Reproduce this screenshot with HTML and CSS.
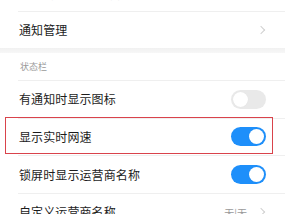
FILE: index.html
```html
<!DOCTYPE html>
<html lang="zh-CN">
<head>
<meta charset="utf-8">
<link rel="stylesheet" href="styles.css">
</head>
<body>
<div class="page">
  <div class="prev"><span class="prev-text">在状态栏、锁屏和桌面图标上显示通知</span></div>
  <div class="row row-first">
    <span class="label">通知管理</span>
    <span class="chev"></span>
  </div>
  <div class="band"></div>
  <div class="section">状态栏</div>
  <div class="row">
    <span class="label">有通知时显示图标</span>
    <span class="toggle"><span class="knob"></span></span>
  </div>
  <div class="row">
    <span class="label">显示实时网速</span>
    <span class="toggle on"><span class="knob"></span></span>
  </div>
  <div class="row">
    <span class="label">锁屏时显示运营商名称</span>
    <span class="toggle on"><span class="knob"></span></span>
  </div>
  <div class="row">
    <span class="label">自定义运营商名称</span>
    <span class="right"><span class="value">无|无</span><span class="chev"></span></span>
  </div>
  <div class="highlight"></div>
</div>
</body>
</html>
```

FILE: styles.css
```css
html, body {
  margin: 0;
  padding: 0;
  background: #ffffff;
}
body {
  font-family: "Noto Sans CJK SC", "Noto Sans", sans-serif;
  color: #1c1c1c;
  overflow: hidden;
}
.page {
  position: relative;
  width: 285px;
  height: 214px;
  overflow: hidden;
}
.prev {
  height: 11px;
  overflow: hidden;
  padding-left: 20px;
}
.prev-text {
  display: block;
  margin-top: -11px;
  font-size: 10px;
  line-height: 12px;
  color: #d6d6d6;
}
.row {
  box-sizing: border-box;
  height: 37.67px;
  margin-left: 18px;
  padding-left: 1px;
  padding-right: 19px;
  border-top: 1px solid #efefef;
  display: flex;
  align-items: center;
  justify-content: space-between;
}
.row-first {
  height: 37px;
}
.label {
  font-size: 12px;
  line-height: 16px;
  letter-spacing: 0.1px;
}
.band {
  height: 5px;
  background: linear-gradient(#f1f1f1, #f7f7f7);
}
.section {
  height: 27px;
  padding-left: 20px;
  display: flex;
  align-items: center;
  font-size: 9px;
  color: #9a9a9a;
}
.chev {
  width: 5px;
  height: 5px;
  border-top: 1px solid #d0d0d0;
  border-right: 1px solid #d0d0d0;
  transform: rotate(45deg);
  margin-right: 2px;
}
.right {
  display: flex;
  align-items: center;
  gap: 11px;
}
.value {
  font-size: 10px;
  color: #9a9a9a;
}
.toggle {
  position: relative;
  width: 35px;
  height: 19px;
  border-radius: 10px;
  background: #e9e9e9;
  display: block;
}
.toggle .knob {
  position: absolute;
  top: 2px;
  left: 2px;
  width: 15px;
  height: 15px;
  border-radius: 50%;
  background: #ffffff;
  box-shadow: 0 0 1px rgba(0,0,0,0.08);
}
.toggle.on {
  background: #1e8ffa;
}
.toggle.on .knob {
  left: 18px;
}
.highlight {
  position: absolute;
  top: 117px;
  left: 5px;
  width: 266px;
  height: 35px;
  border: 1px solid #d9434b;
}
```
